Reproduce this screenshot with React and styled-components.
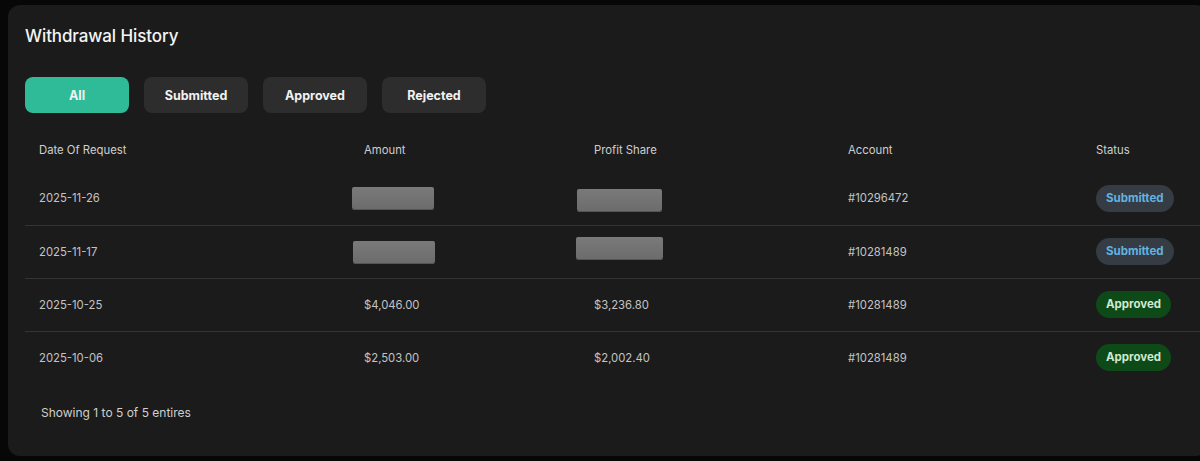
import React from "react";
import styled, { createGlobalStyle } from "styled-components";

const Global = createGlobalStyle`
  html, body { margin: 0; padding: 0; background: #070707; overflow: hidden; }
  body { font-family: Inter, "Open Sans", sans-serif; }
`;

const Page = styled.div`
  padding: 5px 0 0 8px;
  width: 1200px;
  height: 461px;
  box-sizing: border-box;
`;

const Panel = styled.section`
  width: 1200px;
  height: 451px;
  box-sizing: border-box;
  background: #1b1b1b;
  border-radius: 12px;
  padding: 20px 0 0 17px;
`;

const Title = styled.h2`
  margin: 0;
  font-size: 17px;
  line-height: 22px;
  font-weight: 500;
  color: #f4f4f4;
  letter-spacing: -0.1px;
`;

const Tabs = styled.div`
  display: flex;
  gap: 15px;
  margin-top: 30px;
`;

const Tab = styled.button`
  width: 104px;
  height: 36px;
  border: none;
  border-radius: 8px;
  background: ${(p) => (p.$active ? "#30bb98" : "#2d2d2d")};
  color: #f2f2f2;
  font-family: inherit;
  font-size: 12.5px;
  font-weight: 700;
  cursor: pointer;
`;

const Table = styled.table`
  margin-top: 15px;
  width: 1175px;
  table-layout: fixed;
  border-collapse: collapse;
`;

const Th = styled.th`
  height: 44px;
  padding: 0 0 0 14px;
  text-align: left;
  font-size: 11.3px;
  font-weight: 400;
  color: #cfcfcf;
`;

const Tr = styled.tr`
  height: 53px;
  border-bottom: 1px solid ${(p) => (p.$last ? "transparent" : "#343434")};
`;

const Td = styled.td`
  padding: 0 0 0 14px;
  font-size: 11.3px;
  color: #c4c4c4;
  vertical-align: middle;
`;

const Redacted = styled.div`
  width: ${(p) => p.$w}px;
  height: 22px;
  margin-left: ${(p) => p.$dx}px;
  margin-top: ${(p) => p.$dy}px;
  background: linear-gradient(#7a7a7a, #6c6c6c);
  border-radius: 2px;
  box-shadow: 0 1px 0 #555;
`;

const Badge = styled.span`
  display: inline-block;
  padding: 0 10px;
  height: 27px;
  line-height: 27px;
  border-radius: 14px;
  font-size: 11.5px;
  font-weight: 700;
  background: ${(p) => (p.$type === "approved" ? "#0e4a18" : "#353c43")};
  color: ${(p) => (p.$type === "approved" ? "#cfe9cf" : "#63b3e0")};
`;

const Footer = styled.div`
  margin-top: 20px;
  padding-left: 16px;
  font-size: 12px;
  line-height: 16px;
  color: #cfcfcf;
`;

const rows = [
  { date: "2025-11-26", amount: null, profit: null, acc: "#10296472", status: "Submitted", r: [[-12, 0, 82], [-17, 4, 85]] },
  { date: "2025-11-17", amount: null, profit: null, acc: "#10281489", status: "Submitted", r: [[-11, 0, 82], [-18, -8, 87]] },
  { date: "2025-10-25", amount: "$4,046.00", profit: "$3,236.80", acc: "#10281489", status: "Approved" },
  { date: "2025-10-06", amount: "$2,503.00", profit: "$2,002.40", acc: "#10281489", status: "Approved" },
];

export default function App() {
  return (
    <>
      <Global />
      <Page>
        <Panel>
          <Title>Withdrawal History</Title>
          <Tabs>
            <Tab $active>All</Tab>
            <Tab>Submitted</Tab>
            <Tab>Approved</Tab>
            <Tab>Rejected</Tab>
          </Tabs>
          <Table>
            <colgroup>
              <col style={{ width: 325 }} />
              <col style={{ width: 230 }} />
              <col style={{ width: 254 }} />
              <col style={{ width: 248 }} />
              <col />
            </colgroup>
            <thead>
              <tr>
                <Th>Date Of Request</Th>
                <Th>Amount</Th>
                <Th>Profit Share</Th>
                <Th>Account</Th>
                <Th>Status</Th>
              </tr>
            </thead>
            <tbody>
              {rows.map((r, i) => (
                <Tr key={i} $last={i === rows.length - 1}>
                  <Td>{r.date}</Td>
                  <Td>
                    {r.amount ?? <Redacted $dx={r.r[0][0]} $dy={r.r[0][1]} $w={r.r[0][2]} />}
                  </Td>
                  <Td>
                    {r.profit ?? <Redacted $dx={r.r[1][0]} $dy={r.r[1][1]} $w={r.r[1][2]} />}
                  </Td>
                  <Td>{r.acc}</Td>
                  <Td>
                    <Badge $type={r.status.toLowerCase()}>{r.status}</Badge>
                  </Td>
                </Tr>
              ))}
            </tbody>
          </Table>
          <Footer>Showing 1 to 5 of 5 entires</Footer>
        </Panel>
      </Page>
    </>
  );
}
